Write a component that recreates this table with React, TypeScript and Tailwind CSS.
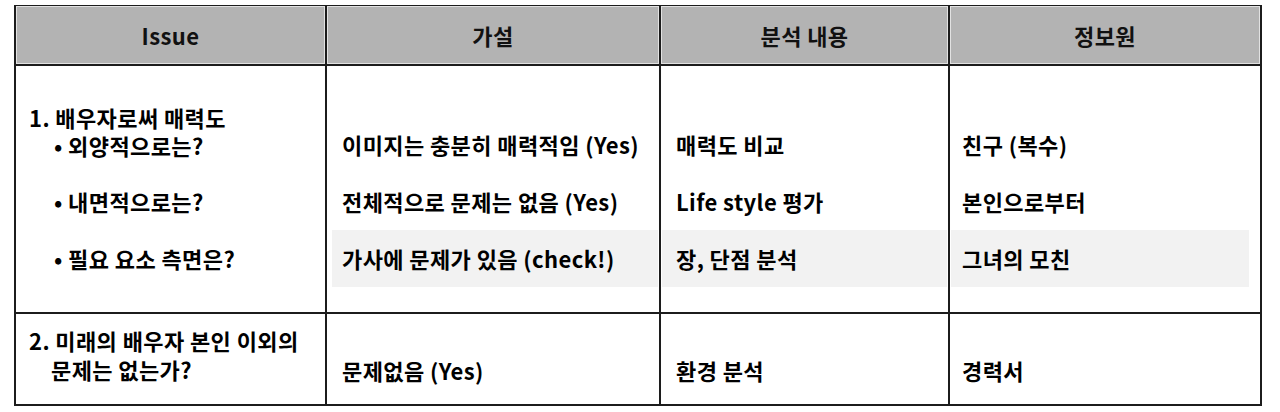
const font = { fontFamily: '"Noto Sans CJK KR", "Noto Sans", sans-serif' };

const headers = ["Issue", "가설", "분석 내용", "정보원"];

const hypotheses = [
  "이미지는 충분히 매력적임 (Yes)",
  "전체적으로 문제는 없음 (Yes)",
  "가사에 문제가 있음 (check!)",
];
const analyses = ["매력도 비교", "Life style 평가", "장, 단점 분석"];
const sources = ["친구 (복수)", "본인으로부터", "그녀의 모친"];

function Lines({ items, band, pad }: { items: string[]; band: string; pad: string }) {
  return (
    <div className="flex flex-col pt-[50px]">
      {items.map((t, i) => (
        <div
          key={t}
          className={`flex h-[57px] items-center ${pad} ${i === 2 ? band : ""}`}
        >
          {t}
        </div>
      ))}
    </div>
  );
}

export default function App() {
  return (
    <div className="min-h-[412px] bg-white pt-[5px] pl-[14px]" style={font}>
      <div className="w-[1248px] border-t border-l-2 border-r-2 border-b-2 border-[#1c1c1c] text-[22px] font-bold tracking-[0.4px] text-black">
        {/* header */}
        <div className="grid grid-cols-[311px_334px_289px_310px] border-b-2 border-[#1c1c1c]">
          {headers.map((h, i) => (
            <div
              key={h}
              className={`flex h-[58px] items-center justify-center bg-[#b3b3b3] text-[#111] shadow-[inset_0_0_0_1px_#e2e2e2] ${
                i < 3 ? "border-r-2 border-[#1c1c1c]" : ""
              }`}
            >
              {h}
            </div>
          ))}
        </div>

        {/* row 1 */}
        <div className="grid h-[248px] grid-cols-[311px_334px_289px_310px] border-b-2 border-[#1c1c1c]">
          <div className="border-r-2 border-[#1c1c1c] pt-[37px] pl-[13px]">
            <p className="leading-[28px]">
              1. 배우자로써 매력도
              <br />
              <span className="pl-[25px]">• 외양적으로는?</span>
            </p>
            <div className="mt-[14px] flex h-[57px] items-center pl-[25px]">• 내면적으로는?</div>
            <div className="flex h-[57px] items-center pl-[25px]">• 필요 요소 측면은?</div>
          </div>
          <div className="border-r-2 border-[#1c1c1c] pl-[5px] pr-[1px]">
            <Lines items={hypotheses} band="bg-[#f2f2f2]" pad="pl-[10px]" />
          </div>
          <div className="border-r-2 border-[#1c1c1c] px-[1px]">
            <Lines items={analyses} band="bg-[#f2f2f2]" pad="pl-[14px]" />
          </div>
          <div className="pl-[1px] pr-[11px]">
            <Lines items={sources} band="bg-[#f2f2f2]" pad="pl-[11px]" />
          </div>
        </div>

        {/* row 2 */}
        <div className="grid h-[90px] grid-cols-[311px_334px_289px_310px]">
          <div className="border-r-2 border-[#1c1c1c] pt-[12px] pl-[35px] -indent-[22px] leading-[29px]">
            2. 미래의 배우자 본인 이외의
            <br />
            문제는 없는가?
          </div>
          <div className="border-r-2 border-[#1c1c1c] pt-[42px] pl-[15px] leading-[28px]">문제없음 (Yes)</div>
          <div className="border-r-2 border-[#1c1c1c] pt-[42px] pl-[15px] leading-[28px]">환경 분석</div>
          <div className="pt-[42px] pl-[12px] leading-[28px]">경력서</div>
        </div>
      </div>
    </div>
  );
}
